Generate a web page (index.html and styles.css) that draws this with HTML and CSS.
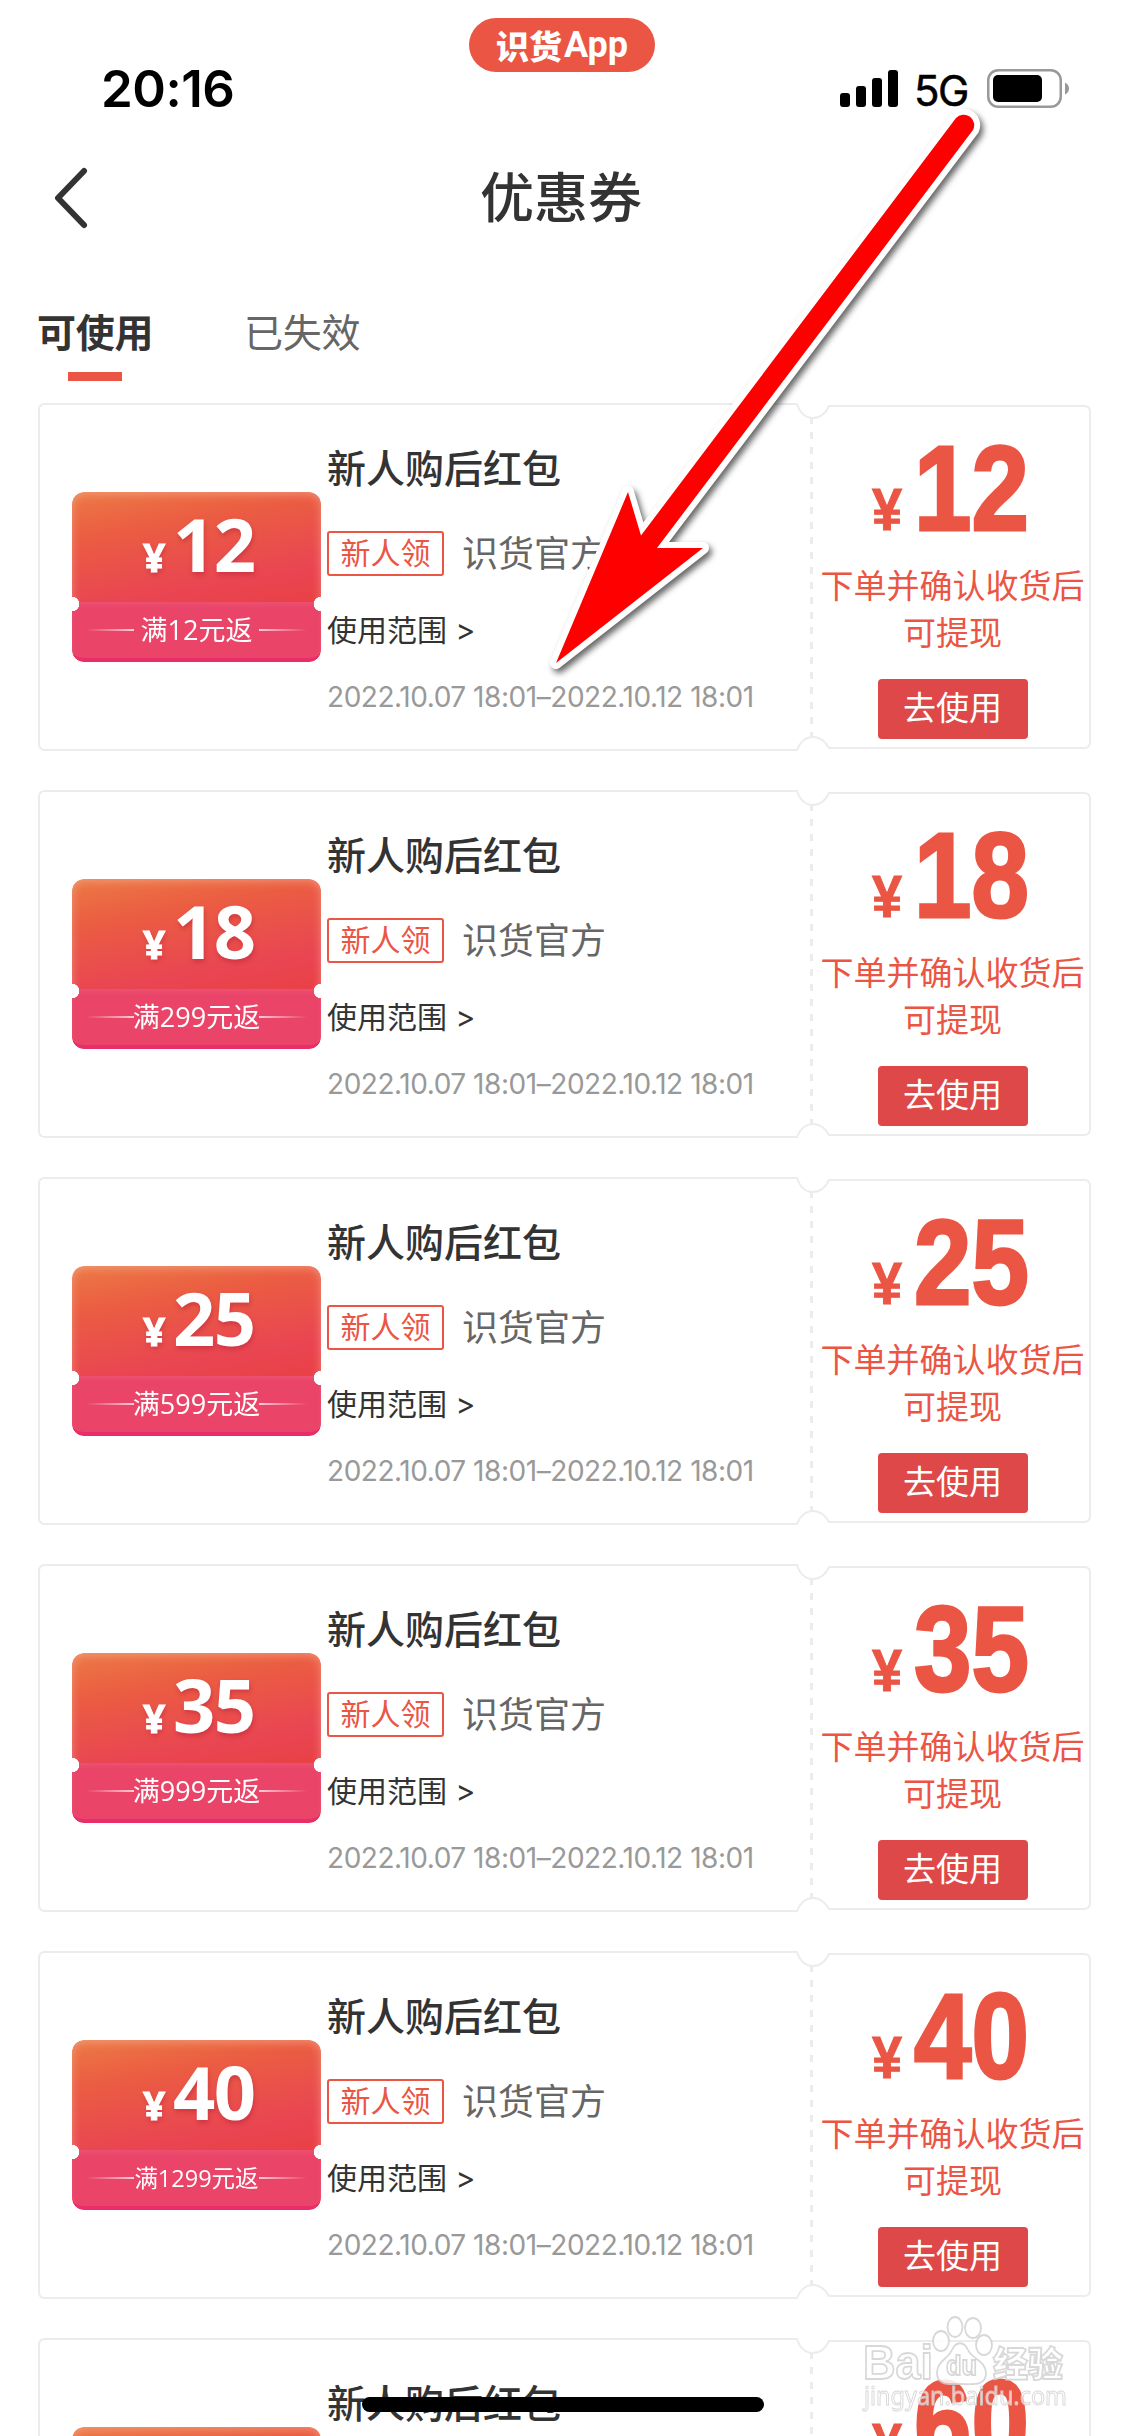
FILE: index.html
```html
<!DOCTYPE html>
<html lang="zh-CN">
<head>
<meta charset="utf-8">
<title>优惠券</title>
<link rel="stylesheet" href="styles.css">
</head>
<body>
<header class="status">
  <time class="clock">20:16</time>
  <div class="pill"><span class="pill-cn">识货</span><span class="pill-en">App</span></div>
  <div class="signals">
    <svg class="bars" width="58" height="37" viewBox="0 0 58 37"><rect y="23" width="10" height="14" rx="3"/><rect x="16" y="16" width="10" height="21" rx="3"/><rect x="32" y="8" width="10" height="29" rx="3"/><rect x="48" width="10" height="37" rx="3"/></svg>
    <span class="net">5G</span>
    <svg class="battery" width="83" height="39" viewBox="0 0 83 39"><rect x="1.25" y="1.25" width="72.5" height="36.5" rx="10" fill="none" stroke="#999" stroke-width="2.5"/><rect x="6" y="6" width="49" height="27" rx="5"/><path d="M78 13.500Q82 15.500 82 19.500T78 25.500Z" fill="#999"/></svg>
  </div>
</header>
<nav class="navbar">
  <svg class="back" width="36" height="64" viewBox="0 0 36 64"><path d="M31 5 5 32l26 27" fill="none" stroke="#333" stroke-width="6" stroke-linecap="round" stroke-linejoin="round"/></svg>
  <h1 class="title">优惠券</h1>
</nav>
<div class="tabs"><span class="tab active">可使用</span><span class="tab">已失效</span></div>
<main class="list" id="list"></main>
<svg class="arrow" width="1125" height="700" viewBox="0 0 1125 700">
  <path d="M956 118 641 535.500 628 492 556 663 703 548H657L973 130A10.500 10.500 0 0 0 956 118Z" fill="#f00" stroke="#fff" stroke-width="12" stroke-linejoin="round" paint-order="stroke"/>
</svg>
<svg class="watermark" width="220" height="110" viewBox="0 0 220 110">
  <g fill="#fff" stroke="#d2d2d2" stroke-width="1.800">
    <text x="3" y="69" class="wm-brand" textLength="70" lengthAdjust="spacingAndGlyphs">Bai</text>
    <path d="M77 63c0-12 11-14 15-23 4-9 12-9 16 0 4 9 18 11 18 23 0 14-15 11-24.500 11s-24.500 3-24.500-11Z"/>
    <ellipse cx="81" cy="31" rx="8" ry="10"/><ellipse cx="95" cy="17" rx="7.500" ry="10"/><ellipse cx="113" cy="18" rx="8" ry="10"/><ellipse cx="124" cy="35" rx="8" ry="10"/>
    <text x="86" y="65" class="wm-du" textLength="31" lengthAdjust="spacingAndGlyphs">du</text>
    <text x="133" y="67" class="wm-cn" textLength="70">经验</text>
    <text x="4" y="95" class="wm-url" textLength="203" lengthAdjust="spacingAndGlyphs">jingyan.baidu.com</text>
  </g>
</svg>
<div class="home"></div>
<script src="app.js"></script>
</body>
</html>
```
FILE: styles.css
```css
* { box-sizing: border-box; }
body {
  margin: 0;
  width: 1125px;
  height: 2436px;
  overflow: hidden;
  position: relative;
  background: #fff;
  color: #333;
  font-family: Inter, "Noto Sans CJK SC", sans-serif;
}
.status {
  height: 132px;
  padding: 18px 55px 0 101px;
  display: grid;
  grid-template-columns: 368px 186px 1fr;
}
.clock { font-size: 51px; font-weight: 600; line-height: 60px; margin-top: 41px; color: #000; white-space: nowrap; letter-spacing: -0.5px; }
.pill {
  height: 54px;
  border-radius: 27px;
  background: #eb5544;
  color: #fff;
  display: flex;
  align-items: center;
  justify-content: center;
  line-height: 54px;
}
.pill-cn { font: 900 33px/52px "Noto Sans CJK SC", sans-serif; }
.pill-en { font: 700 36px/52px Roboto, sans-serif; margin-left: 2px; }
.signals { display: flex; justify-content: flex-end; margin-top: 51px; height: 39px; }
.bars { margin-top: 1px; }
.net { font-size: 42px; line-height: 43px; margin: 0 19px 0 16px; width: 54px; color: #000; letter-spacing: -1.5px; -webkit-text-stroke: .5px #000; }
.navbar { height: 132px; position: relative; display: flex; justify-content: center; align-items: center; padding: 2px 3px 0 0; }
.back { position: absolute; left: 53px; top: 34px; }
.title { margin: 0; font-size: 54px; font-weight: 500; line-height: 80px; }
.tabs { height: 139px; padding: 40px 37px 0; display: flex; gap: 91px; font-size: 39px; line-height: 58px; color: #666; letter-spacing: -.3px; }
.tab.active { color: #333; font-weight: 700; display: flex; flex-direction: column; align-items: center; }
.tab.active::after { content: ""; width: 54px; height: 9px; margin-top: 10px; background: #eb5544; }
.list { height: 2033px; overflow: hidden; padding-left: 37px; display: flex; flex-direction: column; gap: 39px; }
.card { height: 348px; width: 1055px; flex: none; display: grid; grid-template-columns: 290px 485px 280px; position: relative; }
.outline { position: absolute; inset: 0; }
.card > :not(.outline) { position: relative; }
.coupon {
  width: 249px;
  height: 170px;
  margin: 89px 0 0 35px;
  border-radius: 12px;
  color: #fff;
  font-family: "Open Sans", "Noto Sans CJK SC", sans-serif;
  background: linear-gradient(170deg, #ec7a45 0, #eb5d42 22%, #e94552 55%, #e94045 72%);
  box-shadow: inset 0 2px 10px #f6b09a99;
  overflow: hidden;
  -webkit-mask: radial-gradient(circle at 0 112px, #0000 7px, #000 7.500px) left / 51% 100% no-repeat, radial-gradient(circle at 100% 112px, #0000 7px, #000 7.500px) right / 51% 100% no-repeat;
}
.coupon-top { height: 110px; display: flex; align-items: baseline; padding: 0 0 0 71px; font-weight: 700; line-height: 104px; text-shadow: 1px 3px 4px #b6203877; }
.coupon-top small { font-size: 39px; width: 30px; -webkit-text-stroke: 1px #fff; }
.coupon-top b { font-size: 74px; font-weight: 700; letter-spacing: -1.5px; }
.coupon-bottom { height: 60px; background: #ea4469; border-bottom: 4px solid #e92d68; border-radius: 0 0 12px 12px; box-shadow: inset 0 3px 5px #f06a7c66; display: flex; align-items: center; justify-content: center; font-size: 27px; line-height: 54px; white-space: nowrap; }
.coupon-bottom.long { font-size: 23.500px; }
.coupon-bottom span { width: 125px; display: flex; justify-content: center; }
.coupon-bottom::before, .coupon-bottom::after { content: ""; flex: none; width: 48px; height: 2px; background: linear-gradient(90deg, #fff0, #fffb); }
.coupon-bottom::after { transform: scaleX(-1); }
.info { padding-top: 37px; }
.name { margin: 0; font-size: 39px; font-weight: 500; line-height: 58px; }
.from { display: flex; align-items: center; gap: 18px; margin-top: 33px; height: 45px; font-size: 36px; line-height: 40px; color: #666; }
.shop { margin-top: 1px; }
.tag { width: 117px; height: 45px; border: 2px solid #eb5544; border-radius: 3px; color: #eb5544; font-size: 30px; line-height: 40px; text-align: center; }
.scope { margin-top: 32px; font-size: 30px; line-height: 44px; }
.date { margin-top: 25px; font-size: 28px; line-height: 40px; letter-spacing: -.45px; color: #999; white-space: nowrap; }
.value { color: #eb5544; display: flex; flex-direction: column; align-items: center; padding-left: 1px; }
.amount { display: flex; align-items: baseline; width: 270px; height: 160px; line-height: 171px; padding-left: 54px; font-family: "Liberation Sans", sans-serif; font-weight: 700; }
.amount small { font-size: 60px; width: 42px; transform: scaleX(.9); transform-origin: 0 50%; -webkit-text-stroke: 1px #eb5544; }
.amount b { font-size: 120px; width: 115px; transform: scaleX(.86); transform-origin: 0 50%; -webkit-text-stroke: 3px #eb5544; }
.note { width: 270px; text-align: center; font-size: 33px; line-height: 47px; }
.use { width: 150px; height: 60px; margin-top: 22px; border-radius: 4px; background: #de4848; color: #fff; font-size: 33px; line-height: 58px; text-align: center; }
.arrow { position: absolute; left: 0; top: 0; filter: drop-shadow(3px 4px 3px #0009); }
.watermark { position: absolute; left: 860px; top: 2310px; opacity: .85; }
.wm-brand { font: 700 48px "Liberation Sans", sans-serif; }
.wm-du { font: 700 28px "Liberation Sans", sans-serif; }
.wm-cn { font: 900 35px "Noto Sans CJK SC", sans-serif; }
.wm-url { font: 400 26px "Noto Sans", sans-serif; stroke-width: 1px; fill-opacity: .8; }
.home { position: absolute; left: 362px; top: 2397px; width: 402px; height: 15px; border-radius: 8px; background: #000; }
```
FILE: app.js
```js
const coupons = [[12, 12], [18, 299], [25, 599], [35, 999], [40, 1299], [60, 1999]];
const outline = `<svg class="outline" width="1055" height="348" viewBox="0 0 1055 348" fill="none" stroke="#ececec" stroke-width="2">
  <path d="M760 1H8Q2 1 2 7V341Q2 347 8 347H760C763 339 769 334 776 334S789 339 792 345H1047Q1053 345 1053 339V9Q1053 3 1047 3H792C789 10 783 15 776 15S763 10 760 1Z"/>
  <path d="M774.500 14V334" stroke-width="3" stroke-dasharray="7 8"/></svg>`;
document.getElementById("list").innerHTML = coupons.map(([amount, min]) => `
<article class="card">${outline}
  <div class="coupon"><div class="coupon-top"><small>¥</small><b>${amount}</b></div><div class="coupon-bottom${min > 999 ? " long" : ""}"><span>满${min}元返</span></div></div>
  <div class="info">
    <h2 class="name">新人购后红包</h2>
    <div class="from"><span class="tag">新人领</span><span class="shop">识货官方</span></div>
    <div class="scope">使用范围 &gt;</div>
    <div class="date">2022.10.07 18:01–2022.10.12 18:01</div>
  </div>
  <div class="value">
    <div class="amount"><small>¥</small><b>${amount}</b></div>
    <div class="note">下单并确认收货后可提现</div>
    <div class="use">去使用</div>
  </div>
</article>`).join("");
```
